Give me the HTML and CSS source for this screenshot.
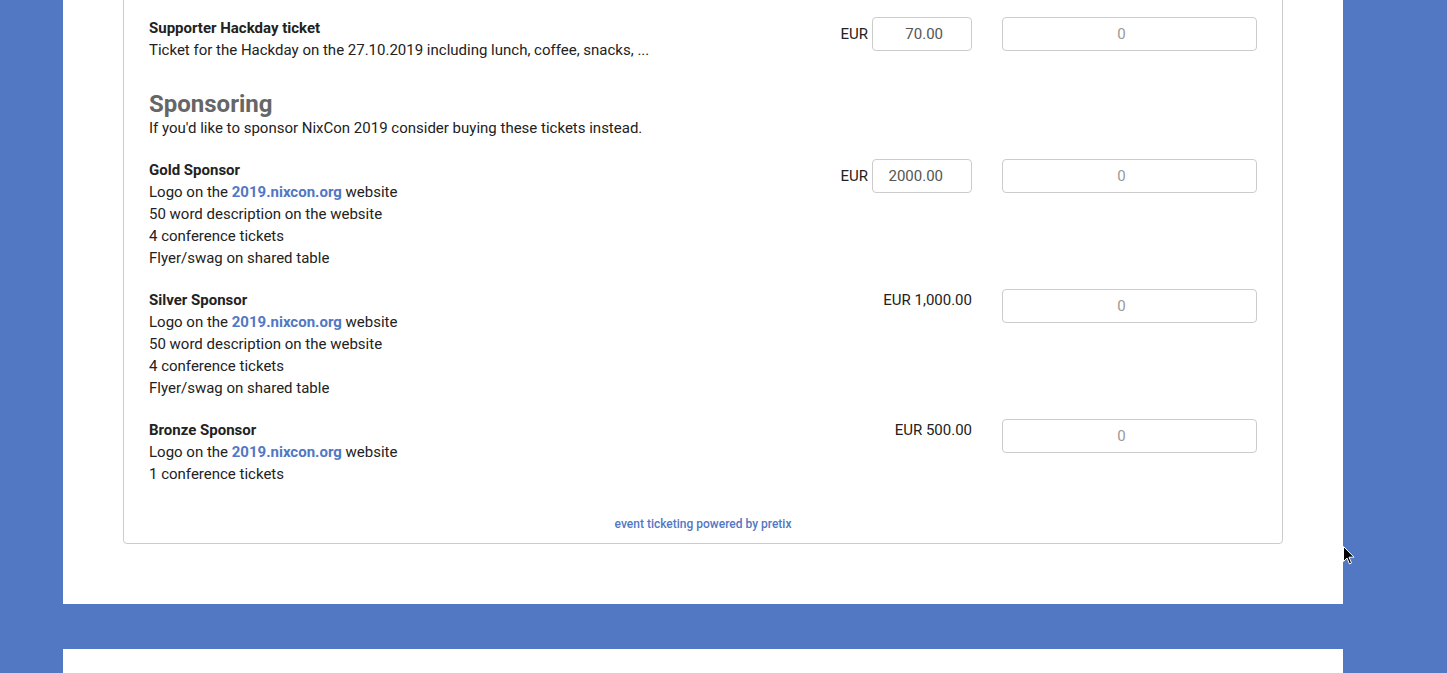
FILE: index.html
```html
<!DOCTYPE html>
<html>
<head>
    <title>NixCon 2019 Tickets</title>
    <link rel="stylesheet" href="styles.css">
</head>
<body>
    <div class="page">
        <div class="panel">
            <div class="box">
                <!-- Hackday -->
                <div class="item">
                    <div class="desc">
                        <strong>Supporter Hackday ticket</strong><br>
                        Ticket for the Hackday on the 27.10.2019 including lunch, coffee, snacks, ...
                    </div>
                    <div class="price free">
                        <span>EUR</span>
                        <input class="price-input" type="text" value="70.00">
                    </div>
                    <div class="qty"><input type="text" placeholder="0"></div>
                </div>

                <!-- Sponsoring category -->
                <div class="category">
                    <h3>Sponsoring</h3>
                    <p>If you'd like to sponsor NixCon 2019 consider buying these tickets instead.</p>
                </div>

                <div class="item">
                    <div class="desc">
                        <strong>Gold Sponsor</strong><br>
                        Logo on the <a href="#">2019.nixcon.org</a> website<br>
                        50 word description on the website<br>
                        4 conference tickets<br>
                        Flyer/swag on shared table
                    </div>
                    <div class="price free">
                        <span>EUR</span>
                        <input class="price-input" type="text" value="2000.00">
                    </div>
                    <div class="qty"><input type="text" placeholder="0"></div>
                </div>

                <div class="item">
                    <div class="desc">
                        <strong>Silver Sponsor</strong><br>
                        Logo on the <a href="#">2019.nixcon.org</a> website<br>
                        50 word description on the website<br>
                        4 conference tickets<br>
                        Flyer/swag on shared table
                    </div>
                    <div class="price">EUR 1,000.00</div>
                    <div class="qty"><input type="text" placeholder="0"></div>
                </div>

                <div class="item">
                    <div class="desc">
                        <strong>Bronze Sponsor</strong><br>
                        Logo on the <a href="#">2019.nixcon.org</a> website<br>
                        1 conference tickets
                    </div>
                    <div class="price">EUR 500.00</div>
                    <div class="qty"><input type="text" placeholder="0"></div>
                </div>

                <div class="powered"><a href="#">event ticketing powered by pretix</a></div>
            </div>
        </div>

        <div class="panel next"></div>
    </div>

    <!-- mouse pointer -->
    <svg class="cursor" width="12" height="19" viewBox="0 0 12 19">
        <path d="M0.5 0.5 L0.5 15.5 L4 12 L6.5 18 L8.5 17 L6 11.2 L11 11.2 Z" fill="#000" stroke="#fff" stroke-width="1"/>
    </svg>
</body>
</html>
```

FILE: styles.css
```css
body {
    margin: 0;
    background-color: #5277c3; /* nixos blue */
    font-family: "Roboto", "Liberation Sans", sans-serif;
    font-size: 15px;
    color: #222;
    position: relative;
    overflow: hidden;
    height: 673px;
}

.page {
    width: 1280px;
    margin-left: 63px;
}

.panel {
    background-color: #fff;
    margin-top: -40px;
    padding: 0 60px 60px;
}

.panel.next {
    margin-top: 45px;
    height: 100px;
    padding: 0;
}

.box {
    border: 1px solid #ccc;
    border-radius: 4px;
    padding: 56px 25px 10px;
}

.item {
    display: flex;
    align-items: flex-start;
}

.item + .item {
    margin-top: 20px;
}

.desc {
    flex: 1;
    line-height: 22px;
}

.desc strong {
    font-weight: bold;
}

a {
    color: #5277c3;
    font-weight: bold;
    text-decoration: none;
}

.price {
    width: 200px;
    line-height: 22px;
    display: flex;
    justify-content: flex-end;
    align-items: center;
}

.price.free {
    gap: 4px;
}

input {
    box-sizing: border-box;
    height: 34px;
    border: 1px solid #ccc;
    border-radius: 4px;
    font-family: "Roboto", "Liberation Sans", sans-serif;
    font-size: 15px;
    color: #555;
    background: #fff;
}

input::placeholder {
    color: #999;
}

.price-input {
    width: 100px;
    text-align: right;
    padding: 6px 28px 6px 12px;
}

.qty {
    width: 255px;
    margin-left: 30px;
}

.qty input {
    width: 100%;
    text-align: center;
    padding: 6px 28px 6px 12px;
}

.category {
    margin: 30px 0 20px;
}

.category h3 {
    margin: 0;
    font-size: 24px;
    line-height: 26px;
    font-weight: bold;
    color: #666;
}

.category p {
    margin: 0;
    line-height: 22px;
}

.powered {
    margin-top: 31px;
    text-align: center;
    font-size: 12px;
    line-height: 17px;
}

.powered a {
    font-weight: 500;
}

.cursor {
    position: absolute;
    left: 1343px;
    top: 546px;
}
```
